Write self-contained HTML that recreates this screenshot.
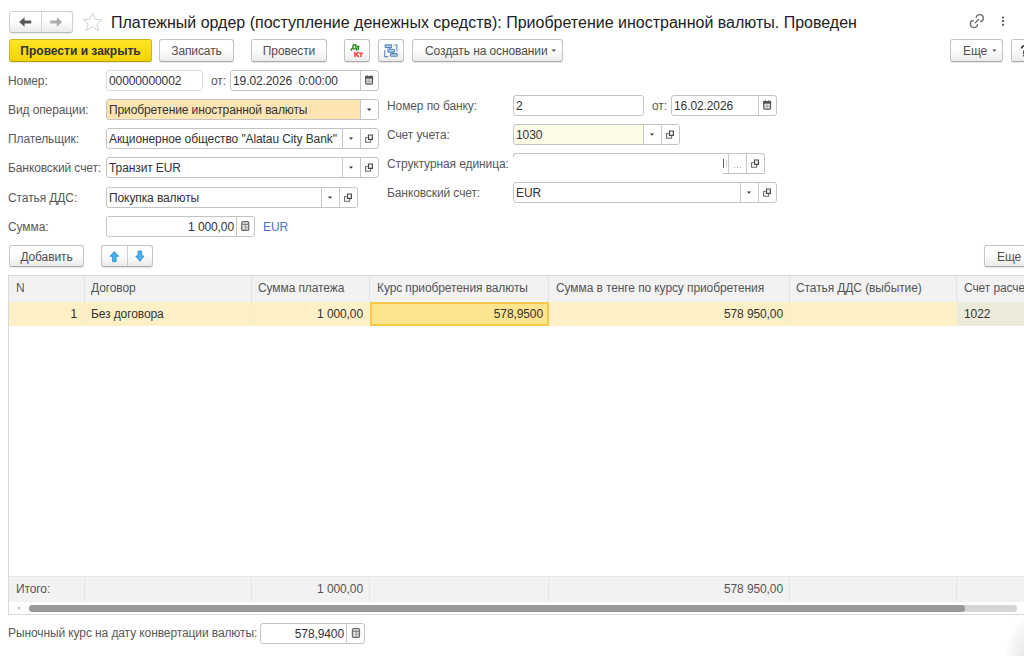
<!DOCTYPE html>
<html><head><meta charset="utf-8">
<style>
*{box-sizing:border-box}
html,body{margin:0;padding:0}
body{width:1024px;height:656px;overflow:hidden;background:#fff;position:relative;font-family:"Liberation Sans",sans-serif;font-size:12px;letter-spacing:-0.1px;color:#333}
.a{position:absolute}
svg{position:absolute;overflow:visible}
.t{position:absolute;white-space:nowrap;line-height:21px;height:21px}
.lbl{color:#585858}
.btn{position:absolute;height:23px;border:1px solid #c4c4c4;border-bottom-color:#ababab;border-radius:3px;background:linear-gradient(#ffffff 40%,#ebebeb);box-shadow:0 1px 1px rgba(0,0,0,.10);color:#4e4e4e;text-align:center;line-height:23px;white-space:nowrap}
.fld{position:absolute;height:21px;border:1px solid #c4c4c4;border-radius:3px;background:#fff;white-space:nowrap;line-height:19px;color:#333}
.fld .v{position:absolute;left:2px;top:1px;line-height:19px}
.fld .vr{position:absolute;top:1px;line-height:19px;text-align:right}
.sep{position:absolute;top:0;width:1px;height:19px;background:#c8c8c8}
.ib{position:absolute;top:0;height:19px;background:#fff}
.ib.r{border-radius:0 2px 2px 0}
.cell{position:absolute;white-space:nowrap;line-height:24px;height:24px}
.hd{color:#555}
</style></head><body>

<!-- ===== header ===== -->
<div class="btn" style="left:9px;top:11px;width:64px;height:22px;border-color:#cfcfcf;border-bottom-color:#bdbdbd"></div>
<div class="a" style="left:41px;top:12px;width:1px;height:20px;background:#d6d6d6"></div>
<svg style="left:0;top:0" width="80" height="40">
  <path d="M19.2 22 L24.6 17.2 L24.6 20.5 L31.2 20.5 L31.2 23.5 L24.6 23.5 L24.6 26.8 Z" fill="#555"/>
  <path d="M62.2 22 L56.8 17.2 L56.8 20.5 L50.2 20.5 L50.2 23.5 L56.8 23.5 L56.8 26.8 Z" fill="#ababab"/>
</svg>
<svg style="left:0;top:0" width="110" height="40">
  <path d="M92.5 13.2 L95.4 19.5 L102 19.6 L96.8 24.1 L98.7 30.6 L92.5 26.8 L86.3 30.6 L88.2 24.1 L83 19.6 L89.6 19.5 Z" fill="none" stroke="#cfd3d8" stroke-width="1" stroke-linejoin="miter"/>
</svg>

<div class="t" style="left:111px;top:12px;font-size:16px;letter-spacing:0;color:#222;line-height:22px;height:22px">Платежный ордер (поступление денежных средств): Приобретение иностранной валюты. Проведен</div>

<svg style="left:960px;top:0" width="60" height="40">
  <g fill="none" stroke="#6e6e6e" stroke-width="1.35" stroke-linecap="round">
    <path d="M16.2 17.3 A3.6 3.6 0 1 1 20.5 21.7"/>
    <path d="M17.5 24.7 A3.6 3.6 0 1 1 13.2 20.5"/>
    <path d="M15 22.9 L18.6 19.4"/>
  </g>
  <circle cx="43" cy="17.6" r="1.15" fill="#555"/>
  <circle cx="43" cy="21.2" r="1.15" fill="#555"/>
  <circle cx="43" cy="24.8" r="1.15" fill="#555"/>
</svg>

<!-- ===== toolbar ===== -->
<div class="btn" style="left:9px;top:39px;width:143px;background:linear-gradient(#ffe629,#f0d300);border-color:#cdb322;border-bottom-color:#b89f10;font-weight:bold;font-size:12px;letter-spacing:0;color:#333">Провести и закрыть</div>
<div class="btn" style="left:159px;top:39px;width:75px">Записать</div>
<div class="btn" style="left:251px;top:39px;width:76px">Провести</div>
<div class="btn" style="left:344px;top:39px;width:26px"></div>
<svg style="left:344px;top:39px" width="26" height="23">
  <g fill="none" stroke-linecap="butt">
    <path d="M8.6 9.8 L9.4 6 L11.9 6 L11.9 9.8" stroke="#2b8a1f" stroke-width="1.5"/>
    <path d="M6.9 9.9 H13.1 M7.3 9.8 V11.7 M12.7 9.8 V11.7" stroke="#2b8a1f" stroke-width="1.3"/>
    <path d="M12.9 7.6 H15.5 M14.2 7.6 V11" stroke="#2b8a1f" stroke-width="1.5"/>
    <path d="M11 12.9 V17.9" stroke="#ff4242" stroke-width="1.6"/>
    <path d="M14.6 12.9 L11.9 15.4 L14.9 17.9" stroke="#ff4242" stroke-width="1.5"/>
    <path d="M15.2 14.3 H18.8 M17 14.3 V17.9" stroke="#ff4242" stroke-width="1.5"/>
  </g>
</svg>
<div class="btn" style="left:378px;top:39px;width:26px"></div>
<svg style="left:378px;top:39px" width="26" height="23">
  <g stroke="#5b8cbd" stroke-width="1.1" fill="none">
    <path d="M12 8.6 V10.3 M15 13.1 V14.6"/>
    <path d="M15.8 6 L18.9 6 L18.9 12.6"/>
    <path d="M6.8 11 L6.8 17.6 L10 17.6"/>
  </g>
  <g stroke="#5687ba" stroke-width="1.1" fill="#bdd3e8">
    <rect x="7.1" y="5.9" width="6.6" height="2.7" rx="0.6"/>
    <rect x="9.9" y="10.3" width="6.6" height="2.8" rx="0.6"/>
    <rect x="12.5" y="14.6" width="6.7" height="2.7" rx="0.6"/>
  </g>
</svg>
<div class="btn" style="left:412px;top:39px;width:151px;text-align:left;padding-left:12px">Создать на основании</div>
<svg style="left:412px;top:39px" width="151" height="23"><path d="M139.5 10.5 L144 10.5 L141.75 12.8 Z" fill="#444"/></svg>

<div class="btn" style="left:950px;top:39px;width:53px;text-align:left;padding-left:12px">Еще</div>
<svg style="left:950px;top:39px" width="53" height="23"><path d="M42.3 10.6 L46.5 10.6 L44.4 12.8 Z" fill="#555"/></svg>
<div class="btn" style="left:1011px;top:39px;width:30px"></div>
<svg style="left:1000px;top:34px" width="24" height="32"><path d="M21.6 14.6 C21.6 12.4, 23.2 11.7, 25 11.7" fill="none" stroke="#3a3a3a" stroke-width="1.7"/><path d="M23.9 16.5 V20" stroke="#3a3a3a" stroke-width="1.6"/><rect x="23.1" y="20.8" width="1.8" height="1.6" fill="#3a3a3a"/></svg>

<!-- ===== left column ===== -->
<div class="t lbl" style="left:8px;top:71px">Номер:</div>
<div class="t lbl" style="left:8px;top:100px">Вид операции:</div>
<div class="t lbl" style="left:8px;top:129px">Плательщик:</div>
<div class="t lbl" style="left:8px;top:158px">Банковский счет:</div>
<div class="t lbl" style="left:8px;top:188px">Статья ДДС:</div>
<div class="t lbl" style="left:8px;top:217px">Сумма:</div>

<div class="fld" style="left:106px;top:70px;width:97px;border-color:#dedede"><span class="v">00000000002</span></div>
<div class="t lbl" style="left:211px;top:71px">от:</div>
<div class="fld" style="left:230px;top:70px;width:149px"><span class="v">19.02.2026&nbsp; 0:00:00</span>
  <div class="sep" style="left:129px"></div>
  <svg style="left:130px;top:0" width="18" height="19"><rect x="4.7" y="5.6" width="6.8" height="7.5" rx="1" fill="#e6e6e6" stroke="#555" stroke-width="1.2"/><rect x="4.1" y="5" width="8" height="2.7" fill="#555"/><path d="M6.3 4.3 V5.5 M9.9 4.3 V5.5" stroke="#555" stroke-width="1.1"/><path d="M5.3 10.3 H10.9 M8.1 7.7 V12.5" stroke="#9a9a9a" stroke-width="0.8"/></svg>
</div>

<div class="fld" style="left:106px;top:99px;width:273px;background:#fde5b3"><span class="v">Приобретение иностранной валюты</span>
  <div class="sep" style="left:253px"></div><div class="ib r" style="left:254px;width:17px"></div>
  <svg style="left:254px;top:0" width="18" height="19"><path d="M6 8.5 L10.4 8.5 L8.2 10.9 Z" fill="#333"/></svg>
</div>

<div class="fld" style="left:106px;top:128px;width:273px"><span class="v">Акционерное общество "Alatau City Bank"</span>
  <div class="sep" style="left:235px"></div><div class="sep" style="left:253px"></div>
  <svg style="left:236px;top:0" width="18" height="19"><path d="M6 8.5 L10 8.5 L8 10.8 Z" fill="#333"/></svg>
  <svg style="left:254px;top:0" width="18" height="19"><path d="M7.5 6 H11.35 V10.3 H7.5 Z" fill="none" stroke="#474747" stroke-width="1.2"/><path d="M6.7 8.5 H4.6 V13.2 H9.6 V10.9" fill="none" stroke="#6a6a6a" stroke-width="1.1" stroke-linejoin="round"/></svg>
</div>

<div class="fld" style="left:106px;top:157px;width:273px"><span class="v">Транзит EUR</span>
  <div class="sep" style="left:235px"></div><div class="sep" style="left:253px"></div>
  <svg style="left:236px;top:0" width="18" height="19"><path d="M6 8.5 L10 8.5 L8 10.8 Z" fill="#333"/></svg>
  <svg style="left:254px;top:0" width="18" height="19"><path d="M7.5 6 H11.35 V10.3 H7.5 Z" fill="none" stroke="#474747" stroke-width="1.2"/><path d="M6.7 8.5 H4.6 V13.2 H9.6 V10.9" fill="none" stroke="#6a6a6a" stroke-width="1.1" stroke-linejoin="round"/></svg>
</div>

<div class="fld" style="left:106px;top:187px;width:252px"><span class="v">Покупка валюты</span>
  <div class="sep" style="left:214px"></div><div class="sep" style="left:232px"></div>
  <svg style="left:215px;top:0" width="18" height="19"><path d="M6 8.5 L10 8.5 L8 10.8 Z" fill="#333"/></svg>
  <svg style="left:233px;top:0" width="18" height="19"><path d="M7.5 6 H11.35 V10.3 H7.5 Z" fill="none" stroke="#474747" stroke-width="1.2"/><path d="M6.7 8.5 H4.6 V13.2 H9.6 V10.9" fill="none" stroke="#6a6a6a" stroke-width="1.1" stroke-linejoin="round"/></svg>
</div>

<div class="fld" style="left:106px;top:216px;width:149px"><span class="vr" style="right:20px">1 000,00</span>
  <div class="sep" style="left:129px"></div>
  <svg style="left:130px;top:0" width="18" height="19"><g transform="translate(0,-1)"><rect x="4.75" y="5.65" width="7" height="8.7" rx="1.2" fill="#dedede" stroke="#6b6b6b" stroke-width="1.3"/><path d="M5.4 7 H11.1" stroke="#d0d0d0" stroke-width="1"/><path d="M5.4 8.3 H11.1" stroke="#6b6b6b" stroke-width="1"/><path d="M8.3 8.6 V13.7" stroke="#8c8c8c" stroke-width="0.9"/><path d="M8.6 11.2 H11.1" stroke="#8c8c8c" stroke-width="0.8"/></g></svg>
</div>
<div class="t" style="left:263px;top:217px;color:#4d6fc6">EUR</div>

<!-- ===== right column ===== -->
<div class="t lbl" style="left:387px;top:96px">Номер по банку:</div>
<div class="t lbl" style="left:387px;top:125px">Счет учета:</div>
<div class="t lbl" style="left:387px;top:154px">Структурная единица:</div>
<div class="t lbl" style="left:387px;top:183px">Банковский счет:</div>

<div class="fld" style="left:513px;top:95px;width:131px"><span class="v">2</span></div>
<div class="t lbl" style="left:652px;top:96px">от:</div>
<div class="fld" style="left:671px;top:95px;width:106px"><span class="v">16.02.2026</span>
  <div class="sep" style="left:86px"></div>
  <svg style="left:87px;top:0" width="18" height="19"><rect x="4.7" y="5.6" width="6.8" height="7.5" rx="1" fill="#e6e6e6" stroke="#555" stroke-width="1.2"/><rect x="4.1" y="5" width="8" height="2.7" fill="#555"/><path d="M6.3 4.3 V5.5 M9.9 4.3 V5.5" stroke="#555" stroke-width="1.1"/><path d="M5.3 10.3 H10.9 M8.1 7.7 V12.5" stroke="#9a9a9a" stroke-width="0.8"/></svg>
</div>

<div class="fld" style="left:513px;top:124px;width:167px;background:#fdfce8"><span class="v">1030</span>
  <div class="sep" style="left:129px"></div><div class="ib" style="left:130px;width:17px"></div><div class="sep" style="left:147px"></div><div class="ib r" style="left:148px;width:17px"></div>
  <svg style="left:130px;top:0" width="18" height="19"><path d="M6 8.5 L10 8.5 L8 10.8 Z" fill="#333"/></svg>
  <svg style="left:148px;top:0" width="18" height="19"><path d="M7.5 6 H11.35 V10.3 H7.5 Z" fill="none" stroke="#474747" stroke-width="1.2"/><path d="M6.7 8.5 H4.6 V13.2 H9.6 V10.9" fill="none" stroke="#6a6a6a" stroke-width="1.1" stroke-linejoin="round"/></svg>
</div>

<div class="fld" style="left:513px;top:153px;width:252px;border-left-color:transparent;border-bottom-color:transparent;border-top-left-radius:3px">
  <div class="a" style="left:-1px;top:-1px;width:3px;height:4px;border-left:1px solid #c4c4c4;border-top:1px solid #c4c4c4;border-top-left-radius:3px"></div>
  <div class="a" style="left:209px;bottom:-1px;width:42px;height:1px;background:#c4c4c4"></div>
  <div class="a" style="left:209px;top:5px;width:1.2px;height:9px;background:#4d5b75"></div>
  <div class="a" style="left:211.5px;top:6px;width:1px;height:7px;background:#e6cba8"></div>
  <div class="sep" style="left:214px"></div><div class="sep" style="left:232px"></div>
  <div class="a" style="left:220px;top:12.5px;width:1.2px;height:1.2px;background:#aaa"></div>
  <div class="a" style="left:223px;top:12.5px;width:1.2px;height:1.2px;background:#999"></div>
  <div class="a" style="left:225.8px;top:12.5px;width:1.2px;height:1.2px;background:#aaa"></div>
  <svg style="left:233px;top:0" width="18" height="19"><path d="M7.5 6 H11.35 V10.3 H7.5 Z" fill="none" stroke="#474747" stroke-width="1.2"/><path d="M6.7 8.5 H4.6 V13.2 H9.6 V10.9" fill="none" stroke="#6a6a6a" stroke-width="1.1" stroke-linejoin="round"/></svg>
</div>

<div class="fld" style="left:513px;top:182px;width:264px"><span class="v">EUR</span>
  <div class="sep" style="left:226px"></div><div class="sep" style="left:244px"></div>
  <svg style="left:227px;top:0" width="18" height="19"><path d="M6 8.5 L10 8.5 L8 10.8 Z" fill="#333"/></svg>
  <svg style="left:245px;top:0" width="18" height="19"><path d="M7.5 6 H11.35 V10.3 H7.5 Z" fill="none" stroke="#474747" stroke-width="1.2"/><path d="M6.7 8.5 H4.6 V13.2 H9.6 V10.9" fill="none" stroke="#6a6a6a" stroke-width="1.1" stroke-linejoin="round"/></svg>
</div>

<!-- ===== table toolbar ===== -->
<div class="btn" style="left:9px;top:245px;width:75px;height:22px;line-height:22px">Добавить</div>
<div class="btn" style="left:101px;top:245px;width:52px;height:22px"></div>
<div class="a" style="left:127px;top:246px;width:1px;height:20px;background:#d0d0d0"></div>
<svg style="left:101px;top:245px" width="52" height="22">
  <path d="M13.3 6.6 L17.6 11.3 L15.1 11.3 L15.1 16.6 L11.5 16.6 L11.5 11.3 L9 11.3 Z" fill="#4ab3ec" stroke="#2e92d2" stroke-width="0.9" stroke-linejoin="round"/>
  <path d="M37.1 6 L40.7 6 L40.7 11 L43.1 11 L38.9 16.3 L34.7 11 L37.1 11 Z" fill="#4ab3ec" stroke="#2e92d2" stroke-width="0.9" stroke-linejoin="round"/>
</svg>
<div class="btn" style="left:984px;top:245px;width:60px;height:22px;line-height:22px;text-align:left;padding-left:12px">Еще</div>

<!-- ===== table ===== -->
<div class="a" style="left:8px;top:275px;width:1030px;height:340px;border:1px solid #d9d9d9;background:#fff"></div>
<div class="a" style="left:9px;top:276px;width:1020px;height:26px;background:#f2f2f2"></div>
<div class="a" style="left:9px;top:302px;width:1020px;height:24px;background:#fdf0c6"></div>
<div class="a" style="left:957px;top:302px;width:70px;height:24px;background:#ecead8"></div>
<div class="a" style="left:370px;top:302px;width:179px;height:24px;background:#fde48f;border:2px solid #f7c948"></div>
<div class="a" style="left:9px;top:576px;width:1020px;height:26px;background:#f2f2f2;border-top:1px solid #e6e6e6"></div>
<!-- column dividers -->
<div class="a" style="left:84px;top:276px;width:1px;height:26px;background:#e3e3e3"></div>
<div class="a" style="left:251px;top:276px;width:1px;height:26px;background:#e3e3e3"></div>
<div class="a" style="left:369px;top:276px;width:1px;height:26px;background:#e3e3e3"></div>
<div class="a" style="left:548px;top:276px;width:1px;height:26px;background:#e3e3e3"></div>
<div class="a" style="left:789px;top:276px;width:1px;height:26px;background:#e3e3e3"></div>
<div class="a" style="left:956px;top:276px;width:1px;height:26px;background:#e3e3e3"></div>
<div class="a" style="left:84px;top:302px;width:1px;height:24px;background:#f8eccb"></div>
<div class="a" style="left:251px;top:302px;width:1px;height:24px;background:#f8eccb"></div>
<div class="a" style="left:789px;top:302px;width:1px;height:24px;background:#f8eccb"></div>
<div class="a" style="left:84px;top:577px;width:1px;height:25px;background:#e6e6e6"></div>
<div class="a" style="left:251px;top:577px;width:1px;height:25px;background:#e6e6e6"></div>
<div class="a" style="left:369px;top:577px;width:1px;height:25px;background:#e6e6e6"></div>
<div class="a" style="left:548px;top:577px;width:1px;height:25px;background:#e6e6e6"></div>
<div class="a" style="left:789px;top:577px;width:1px;height:25px;background:#e6e6e6"></div>
<div class="a" style="left:956px;top:577px;width:1px;height:25px;background:#e6e6e6"></div>

<div class="cell hd" style="left:16px;top:276px">N</div>
<div class="cell hd" style="left:91px;top:276px">Договор</div>
<div class="cell hd" style="left:258px;top:276px">Сумма платежа</div>
<div class="cell hd" style="left:377px;top:276px">Курс приобретения валюты</div>
<div class="cell hd" style="left:556px;top:276px">Сумма в тенге по курсу приобретения</div>
<div class="cell hd" style="left:796px;top:276px">Статья ДДС (выбытие)</div>
<div class="cell hd" style="left:964px;top:276px">Счет расчетов</div>

<div class="cell" style="left:9px;top:302px;width:68px;text-align:right">1</div>
<div class="cell" style="left:91px;top:302px">Без договора</div>
<div class="cell" style="left:252px;top:302px;width:111px;text-align:right">1 000,00</div>
<div class="cell" style="left:372px;top:302px;width:171px;text-align:right">578,9500</div>
<div class="cell" style="left:549px;top:302px;width:234px;text-align:right">578 950,00</div>
<div class="cell" style="left:964px;top:302px">1022</div>

<div class="cell hd" style="left:16px;top:577px">Итого:</div>
<div class="cell hd" style="left:252px;top:577px;width:111px;text-align:right">1 000,00</div>
<div class="cell hd" style="left:549px;top:577px;width:234px;text-align:right">578 950,00</div>

<!-- scrollbar -->
<div class="a" style="left:17px;top:606px;width:0;height:0;border-top:2.5px solid transparent;border-bottom:2.5px solid transparent;border-right:3px solid #c4c4c4"></div>
<div class="a" style="left:29px;top:605px;width:988px;height:7px;border-radius:4px;background:#d6d6d6"></div>
<div class="a" style="left:29px;top:605px;width:936px;height:7px;border-radius:4px;background:#999"></div>

<!-- ===== bottom ===== -->
<div class="t lbl" style="left:8px;top:623px">Рыночный курс на дату конвертации валюты:</div>
<div class="fld" style="left:260px;top:623px;width:105px"><span class="vr" style="right:20px">578,9400</span>
  <div class="sep" style="left:85px"></div>
  <svg style="left:86px;top:0" width="18" height="19"><g transform="translate(0.7,-1)"><rect x="4.75" y="5.65" width="7" height="8.7" rx="1.2" fill="#dedede" stroke="#6b6b6b" stroke-width="1.3"/><path d="M5.4 7 H11.1" stroke="#d0d0d0" stroke-width="1"/><path d="M5.4 8.3 H11.1" stroke="#6b6b6b" stroke-width="1"/><path d="M8.3 8.6 V13.7" stroke="#8c8c8c" stroke-width="0.9"/><path d="M8.6 11.2 H11.1" stroke="#8c8c8c" stroke-width="0.8"/></g></svg>
</div>

<div class="a" style="left:984px;top:600px;width:40px;height:56px;background:radial-gradient(ellipse 24px 50px at 44px 64px,rgba(0,0,0,.12),rgba(0,0,0,0))"></div>
</body></html>
